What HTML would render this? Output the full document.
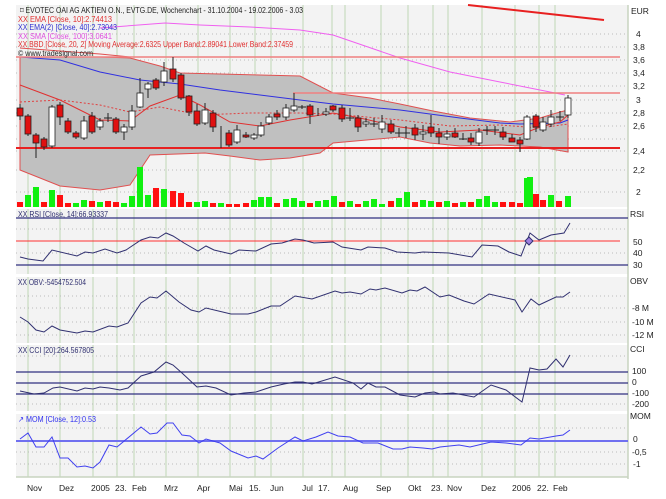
<!DOCTYPE html><html><head><meta charset="utf-8"><style>body{margin:0;background:#fff}svg{display:block;font-family:"Liberation Sans",sans-serif}</style></head><body>
<svg width="666" height="499" xmlns="http://www.w3.org/2000/svg">
<rect width="666" height="499" fill="#fff"/>
<g fill="#f3f3f3"><rect x="16" y="5" width="612" height="202"/><rect x="16" y="209" width="612" height="65"/><rect x="16" y="277" width="612" height="66"/><rect x="16" y="345" width="612" height="66"/><rect x="16" y="414" width="612" height="63"/></g>
<g stroke="#c8dcc0" stroke-width="1.2"><path d="M28 5V477M60 5V477M93 5V477M117 5V477M134 5V477M166 5V477M198 5V477M230 5V477M255 5V477M271 5V477M303 5V477M332 5V477M345 5V477M381 5V477M408 5V477M433 5V477M448 5V477M482 5V477M515 5V477M539 5V477M555 5V477"/></g>
<g stroke="#bbb" stroke-dasharray="1,3"><path d="M16 34H628M16 47H628M16 60H628M16 73H628M16 86H628M16 100H628M16 113H628M16 126H628M16 139H628M16 151H628M16 170H628M16 192H628M16 229H628M16 253H628M16 296H628M16 308H628M16 322H628M16 335H628M16 356H628M16 404H628M16 428H628M16 452H628M16 464H628"/></g>
<g fill="#fff"><rect x="0" y="207" width="628" height="2"/><rect x="0" y="274" width="628" height="3"/><rect x="0" y="343" width="628" height="2"/><rect x="0" y="411" width="628" height="3"/></g>
<path d="M628 5V479M16 477H628" stroke="#c8d4c0" stroke-width="1.5"/>
<path d="M20 57L60 57L100 57L130 58L160 66L180 73L220 74L260 75L300 76L333 93L370 98L400 104L433 111L470 118L510 122L540 118L560 112L568 110L568 152L540 147L500 145L460 146L430 143L400 137L333 143L320 153L290 158L260 160L230 156L205 153L150 155L130 185L100 190L60 186L20 170Z" fill="#c0c0c0" stroke="#e05050" stroke-width="1"/>
<path d="M20 48L60 51L100 54L130 57" fill="none" stroke="#e05050"/>
<path d="M20 102L60 100L100 105L130 112L160 107L200 115L250 113L300 113L333 114L400 120L450 126L500 125L540 128L568 124" fill="none" stroke="#e04040" stroke-dasharray="2,2"/>
<path d="M20 57L60 60L100 72L140 80L180 84L220 90L260 95L300 100L333 104L400 110L460 118L500 123L520 124L560 123L568 120" fill="none" stroke="#3030e0"/>
<path d="M20 85L60 100L100 120L130 121L150 106L180 95L200 105L230 122L260 126L290 120L333 113L360 118L400 127L440 132L480 130L520 135L540 127L560 122L568 115" fill="none" stroke="#e03030"/>
<path d="M100 28L165 23L200 25L250 27L300 30L333 35L400 58L450 72L500 82L550 92L565 95" fill="none" stroke="#f060f0"/>
<path d="M16 57H620M293 93H620" stroke="#f08080" stroke-width="1.5"/>
<path d="M16 148H620" stroke="#e82020" stroke-width="2"/>
<path d="M468 5L604 20" stroke="#e82020" stroke-width="2"/>
<g stroke="#222" stroke-width="1">
<path d="M20 104V120M28 114V136M36 133V158M44 137V150M52 105V148M60 102V125M68 118V134M76 131V139M84 116V140M92 112V134M100 118V130M108 113V122M116 117V134M124 124V140M132 105V130M140 78V108M148 82V98M156 78V90M164 62V86M173 57V82M181 73V100M189 95V116M197 104V126M205 103V125M213 110V132M221 126V148M229 130V147M237 125V144M246 132V138M254 133V140M261 122V137M269 114V125M277 110V120M286 104V120M294 93V112M302 105V109M310 104V124M318 108V116M326 108V116M333 105V112M342 105V122M350 108V121M358 115V132M366 118V127M374 118V127M382 115V133M391 120V134M399 128V137M406 126V138M415 124V140M423 125V140M431 115V137M439 128V144M447 130V140M455 128V138M463 133V140M471 133V145M479 128V146M487 126V135M495 126V135M503 127V140M512 134V142M520 137V152M527 115V140M536 114V132M543 117V132M551 110V127M560 111V121M568 95V118M104 118H112M298 107H306M346 118H354M370 124H378M395 133H403M402 133H410M459 139H467M483 130H491M491 130H499M556 117H564"/>
</g>
<g stroke="#222" stroke-width="0.8" fill="#e01010">
<rect x="17" y="108" width="6" height="8"/><rect x="25" y="116" width="6" height="18"/><rect x="33" y="135" width="6" height="8"/><rect x="41" y="139" width="6" height="8"/><rect x="57" y="105" width="6" height="12"/><rect x="65" y="121" width="6" height="11"/><rect x="73" y="133" width="6" height="4"/><rect x="89" y="116" width="6" height="16"/><rect x="113" y="119" width="6" height="13"/><rect x="153" y="80" width="6" height="8"/><rect x="170" y="69" width="6" height="10"/><rect x="178" y="75" width="6" height="23"/><rect x="186" y="96" width="6" height="16"/><rect x="194" y="111" width="6" height="13"/><rect x="210" y="113" width="6" height="14"/><rect x="226" y="133" width="6" height="12"/><rect x="243" y="135" width="6" height="2"/><rect x="274" y="114" width="6" height="3"/><rect x="307" y="106" width="6" height="9"/><rect x="330" y="106" width="6" height="4"/><rect x="339" y="108" width="6" height="11"/><rect x="355" y="118" width="6" height="9"/><rect x="388" y="124" width="6" height="8"/><rect x="412" y="128" width="6" height="7"/><rect x="428" y="127" width="6" height="6"/><rect x="436" y="133" width="6" height="4"/><rect x="452" y="133" width="6" height="4"/><rect x="468" y="138" width="6" height="4"/><rect x="500" y="132" width="6" height="5"/><rect x="509" y="138" width="6" height="4"/><rect x="517" y="140" width="6" height="4"/><rect x="533" y="116" width="6" height="11"/>
</g>
<g stroke="#222" stroke-width="0.8" fill="#fff">
<rect x="49" y="107" width="6" height="39"/><rect x="81" y="121" width="6" height="17"/><rect x="97" y="121" width="6" height="6"/><rect x="121" y="127" width="6" height="5"/><rect x="129" y="111" width="6" height="16"/><rect x="137" y="93" width="6" height="14"/><rect x="145" y="84" width="6" height="5"/><rect x="161" y="71" width="6" height="11"/><rect x="202" y="110" width="6" height="13"/><rect x="234" y="130" width="6" height="12"/><rect x="251" y="135" width="6" height="3"/><rect x="258" y="126" width="6" height="9"/><rect x="266" y="117" width="6" height="6"/><rect x="283" y="108" width="6" height="9"/><rect x="291" y="106" width="6" height="4"/><rect x="323" y="112" width="6" height="2"/><rect x="363" y="122" width="6" height="2"/><rect x="379" y="122" width="6" height="7"/><rect x="420" y="132" width="6" height="2"/><rect x="444" y="134" width="6" height="3"/><rect x="476" y="132" width="6" height="11"/><rect x="524" y="117" width="6" height="22"/><rect x="540" y="122" width="6" height="8"/><rect x="548" y="117" width="6" height="7"/><rect x="565" y="98" width="6" height="17"/>
</g>
<g fill="#ff1010"><path d="M17 202h6v5h-6zM41 202h6v5h-6zM57 195h6v12h-6zM65 203h6v4h-6zM89 201h6v6h-6zM105 201h6v6h-6zM113 202h6v5h-6zM153 188h6v19h-6zM170 191h6v16h-6zM178 193h6v14h-6zM186 202h6v5h-6zM210 203h6v4h-6zM226 204h6v3h-6zM234 204h6v3h-6zM243 203h6v4h-6zM274 203h6v4h-6zM307 203h6v4h-6zM339 202h6v5h-6zM355 204h6v3h-6zM388 201h6v6h-6zM412 202h6v5h-6zM436 202h6v5h-6zM452 203h6v4h-6zM468 202h6v5h-6zM500 202h6v5h-6zM509 202h6v5h-6zM517 203h6v4h-6zM533 194h6v13h-6zM540 200h6v7h-6zM556 201h6v6h-6z"/></g>
<g fill="#10f010"><path d="M25 195h6v12h-6zM33 187h6v20h-6zM49 190h6v17h-6zM73 203h6v4h-6zM81 200h6v7h-6zM97 202h6v5h-6zM121 203h6v4h-6zM129 196h6v11h-6zM137 167h6v40h-6zM145 195h6v12h-6zM161 189h6v18h-6zM194 202h6v5h-6zM202 201h6v6h-6zM218 203h6v4h-6zM251 200h6v7h-6zM258 197h6v10h-6zM266 197h6v10h-6zM283 199h6v8h-6zM291 198h6v9h-6zM299 201h6v6h-6zM315 201h6v6h-6zM323 200h6v7h-6zM331 196h6v11h-6zM347 201h6v6h-6zM363 201h6v6h-6zM371 199h6v8h-6zM379 204h6v3h-6zM396 198h6v9h-6zM404 192h6v15h-6zM420 200h6v7h-6zM428 201h6v6h-6zM444 201h6v6h-6zM460 202h6v5h-6zM476 199h6v8h-6zM484 196h6v11h-6zM492 202h6v5h-6zM524 178h6v29h-6zM527 177h6v30h-6zM548 195h6v12h-6zM565 196h6v11h-6z"/></g>
<path d="M16 218H628M16 265H628" stroke="#303080" stroke-width="1.3"/>
<path d="M16 241H620" stroke="#ff3030"/>
<polyline fill="none" stroke="#303070" points="20,257 28,259 43,261 52,250 77,256 85,252 93,253 105,249 117,253 126,250 141,240 150,237 158,238 166,233 173,236 184,243 198,251 206,246 214,250 231,254 239,250 256,251 271,244 282,243 295,239 303,240 314,243 333,242 342,247 361,250 368,247 385,248 397,252 415,253 423,252 449,253 472,257 482,245 498,246 509,252 521,256 530,233 539,240 551,235 564,233 570,223"/>
<path d="M525 241l4-4 4 4-4 4z" fill="#a080e0" stroke="#303070"/>
<polyline fill="none" stroke="#303070" points="20,317 28,322 36,330 44,332 52,326 60,330 77,333 85,331 93,332 109,326 117,327 128,323 141,303 150,297 157,298 166,291 179,302 191,310 199,312 206,308 231,314 248,314 256,312 271,306 280,306 295,296 312,299 335,291 342,293 350,292 361,294 370,289 376,290 385,288 402,293 410,290 417,291 425,287 440,297 449,295 464,301 474,304 489,294 515,300 522,312 531,299 539,305 556,297 563,297 570,292"/>
<path d="M16 372H628M16 383H628M16 394H628" stroke="#303080" stroke-width="1.3"/>
<polyline fill="none" stroke="#303070" points="20,391 34,394 44,393 53,388 60,387 77,391 85,388 93,389 100,387 109,388 120,390 128,388 141,376 154,372 166,362 173,365 182,373 197,387 206,386 216,388 231,395 244,393 256,392 271,387 284,384 295,382 303,382 312,384 335,377 353,383 361,389 368,383 376,387 385,387 400,395 415,397 425,393 434,392 440,394 453,393 474,397 491,385 506,390 522,402 530,368 539,370 547,369 556,359 563,367 570,355"/>
<path d="M16 441H628" stroke="#7070f0" stroke-width="2"/>
<polyline fill="none" stroke="#4040f0" points="20,439 28,433 36,447 44,447 52,437 60,458 68,458 77,467 85,466 93,468 100,462 109,445 117,447 141,427 150,434 157,433 167,423 173,423 182,435 190,436 199,443 206,439 220,443 231,451 248,458 256,456 263,459 278,448 295,437 303,441 316,437 328,432 338,436 350,437 363,443 378,443 393,449 402,449 410,447 423,448 432,449 440,447 459,445 470,447 491,442 506,443 521,445 530,438 539,439 556,436 563,435 570,430"/>
<g font-size="8" fill="#222">
<text x="20" y="13" textLength="283" lengthAdjust="spacingAndGlyphs">⌑ EVOTEC OAI AG AKTIEN O.N., EVTG.DE, Wochenchart - 31.10.2004 - 19.02.2006 - 3.03</text>
<text x="18" y="22" fill="#e03030" textLength="94" lengthAdjust="spacingAndGlyphs">XX EMA [Close, 10]:2.74413</text>
<text x="18" y="30" fill="#3030d0" textLength="99" lengthAdjust="spacingAndGlyphs">XX EMA(2) [Close, 40]:2.73043</text>
<text x="18" y="39" fill="#e050e0" textLength="94" lengthAdjust="spacingAndGlyphs">XX SMA [Close, 100]:3.0641</text>
<text x="18" y="47" fill="#e03030" textLength="275" lengthAdjust="spacingAndGlyphs">XX BBD [Close, 20, 2] Moving Average:2.6325 Upper Band:2.89041 Lower Band:2.37459</text>
<text x="18" y="56" textLength="75" lengthAdjust="spacingAndGlyphs">© www.tradesignal.com</text>
<text x="18" y="217" fill="#303070" textLength="90" lengthAdjust="spacingAndGlyphs">XX RSI [Close, 14]:66.93337</text>
<text x="18" y="285" fill="#303070" textLength="68" lengthAdjust="spacingAndGlyphs">XX OBV:-5454752.504</text>
<text x="18" y="353" fill="#303070" textLength="76" lengthAdjust="spacingAndGlyphs">XX CCI [20]:264.567805</text>
<text x="18" y="422" fill="#3030f0" textLength="78" lengthAdjust="spacingAndGlyphs">↗ MOM [Close, 12]:0.53</text>
</g>
<g font-size="8.5" fill="#222">
<text x="631" y="14">EUR</text><text x="636" y="37">4</text><text x="633" y="50">3,8</text><text x="633" y="63">3,6</text><text x="633" y="76">3,4</text><text x="633" y="89">3,2</text><text x="636" y="103">3</text><text x="633" y="116">2,8</text><text x="633" y="129">2,6</text><text x="633" y="154">2,4</text><text x="633" y="173">2,2</text><text x="636" y="195">2</text>
<text x="630" y="217">RSI</text><text x="633" y="245">50</text><text x="633" y="256">40</text><text x="633" y="268">30</text>
<text x="630" y="284">OBV</text><text x="632" y="311">-8 M</text><text x="632" y="325">-10 M</text><text x="632" y="338">-12 M</text>
<text x="630" y="352">CCI</text><text x="632" y="374">100</text><text x="632" y="385">0</text><text x="632" y="396">-100</text><text x="632" y="407">-200</text>
<text x="630" y="419">MOM</text><text x="633" y="442">0</text><text x="632" y="455">-0,5</text><text x="633" y="467">-1</text>
<text x="27" y="491">Nov</text><text x="59" y="491">Dez</text><text x="91" y="491">2005</text><text x="115" y="491">23.</text><text x="132" y="491">Feb</text><text x="164" y="491">Mrz</text><text x="197" y="491">Apr</text><text x="229" y="491">Mai</text><text x="249" y="491">15.</text><text x="270" y="491">Jun</text><text x="302" y="491">Jul</text><text x="318" y="491">17.</text><text x="343" y="491">Aug</text><text x="376" y="491">Sep</text><text x="408" y="491">Okt</text><text x="431" y="491">23.</text><text x="447" y="491">Nov</text><text x="481" y="491">Dez</text><text x="512" y="491">2006</text><text x="537" y="491">22.</text><text x="553" y="491">Feb</text>
</g>
</svg>
</body></html>
